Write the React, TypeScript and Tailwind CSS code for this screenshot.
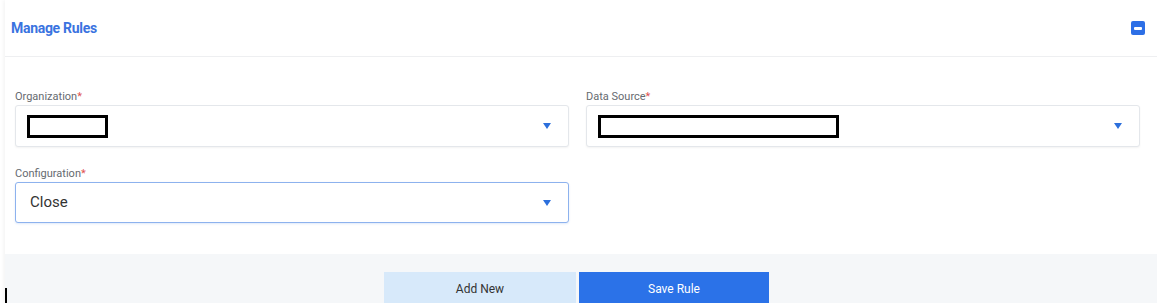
import { useState } from "react";

interface SelectProps {
  label: string;
  value?: string;
  redactWidth?: number;
  active?: boolean;
}

// small blue caret used in every select
function Caret() {
  return (
    <svg width="8" height="6" viewBox="0 0 8 6" className="shrink-0">
      <path d="M0 0 H8 L4 6 Z" fill="#2c6fdc" />
    </svg>
  );
}

function SelectField({ label, value, redactWidth, active }: SelectProps) {
  return (
    <div className="flex flex-col">
      <div className="text-[11px] leading-[14px] text-[#666a70] mb-[1px]">
        {label}
        <span className="text-[#e05252]">*</span>
      </div>
      <div
        className={`flex items-center justify-between rounded-[3px] bg-white pl-[11px] pr-[17px] ${
          active
            ? "h-[41px] border border-[#8db2ee] shadow-[0_1px_2px_rgba(44,111,220,0.15)]"
            : "h-[42px] border border-[#e4e7eb] shadow-[0_1px_2px_rgba(0,0,0,0.05)]"
        }`}
      >
        {value ? (
          <span className="text-[15px] text-[#333] pl-[3px]">{value}</span>
        ) : (
          <div
            className="h-[23px] border-[3px] border-black bg-white"
            style={{ width: redactWidth }}
          />
        )}
        <Caret />
      </div>
    </div>
  );
}

export default function App() {
  const [open] = useState(true);

  return (
    <div className="w-[1157px] h-[303px] overflow-hidden bg-white font-['Roboto',sans-serif]">
      <div className="ml-[5px] h-full flex flex-col shadow-[-2px_0_3px_rgba(0,0,0,0.04)]">
        {/* 헤더 */}
        <div className="h-[57px] shrink-0 flex items-center justify-between pl-[6px] pr-[12px] border-b border-[#eeeff1]">
          <span className="text-[14px] font-bold text-[#3a73e0] tracking-[-0.3px]">
            Manage Rules
          </span>
          <button className="w-[14px] h-[14px] rounded-[2px] bg-[#2d6fe6] flex items-center justify-center">
            <span className="w-[8px] h-[3px] bg-white rounded-[1px]" />
          </button>
        </div>

        {/* 폼 영역 */}
        {open && (
          <div className="grid grid-cols-2 gap-x-[17px] gap-y-[20px] pl-[10px] pr-[17px] pt-[33px] pb-[31px]">
            <SelectField label="Organization" redactWidth={81} />
            <SelectField label="Data Source" redactWidth={241} />
            <SelectField label="Configuration" value="Close" active />
          </div>
        )}

        {/* 하단 버튼 */}
        <div className="relative flex-1 bg-[#f5f7f9] flex justify-center items-start gap-[3px] pt-[18px] pr-[9px]">
          <span className="absolute left-0 bottom-0 w-[2px] h-[18px] bg-black" />
          <button className="w-[192px] h-[34px] bg-[#d7e9fa] text-[12px] text-[#333]">
            Add New
          </button>
          <button className="w-[190px] h-[34px] bg-[#2b72e8] text-[12px] text-white">
            Save Rule
          </button>
        </div>
      </div>
    </div>
  );
}
